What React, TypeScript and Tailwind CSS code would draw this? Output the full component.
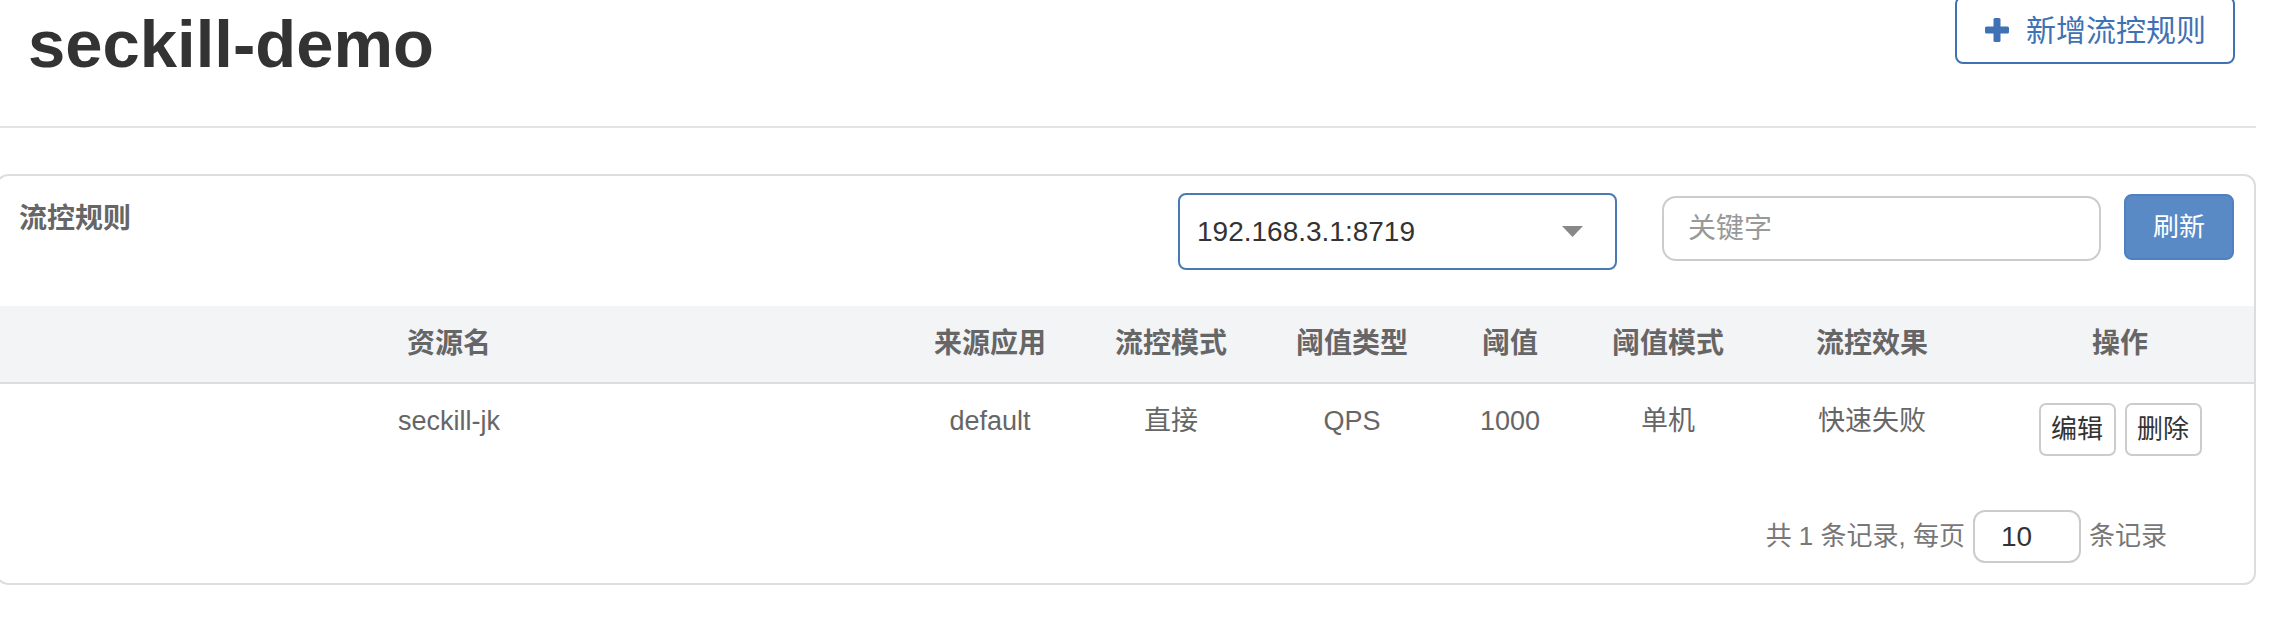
import React from "react";

const FONT = { fontFamily: '"Liberation Sans", "Noto Sans CJK SC", sans-serif' };

const columns = [
  { title: "资源名", width: "w-[902px]" },
  { title: "来源应用", width: "w-[180px]" },
  { title: "流控模式", width: "w-[182px]" },
  { title: "阈值类型", width: "w-[180px]" },
  { title: "阈值", width: "w-[136px]" },
  { title: "阈值模式", width: "w-[180px]" },
  { title: "流控效果", width: "w-[228px]" },
  { title: "操作", width: "" },
];

const rules = [
  {
    resource: "seckill-jk",
    limitApp: "default",
    strategy: "直接",
    grade: "QPS",
    count: "1000",
    clusterMode: "单机",
    behavior: "快速失败",
  },
];

function PlusIcon() {
  return (
    <svg width="24" height="24" viewBox="0 0 24 24" fill="#3f72b4">
      <rect x="8.5" y="0" width="7" height="24" rx="1.5" />
      <rect x="0" y="8.5" width="24" height="7" rx="1.5" />
    </svg>
  );
}

function RuleRow({ rule }: { rule: (typeof rules)[number] }) {
  const cells = [
    rule.resource,
    rule.limitApp,
    rule.strategy,
    rule.grade,
    rule.count,
    rule.clusterMode,
    rule.behavior,
  ];
  return (
    <tr>
      {cells.map((c, i) => (
        <td
          key={i}
          className="align-top pt-[17px] pb-[16px] text-center text-[27px] leading-[40px] text-[#666]"
        >
          {c}
        </td>
      ))}
      <td className="align-top pt-[19px] pb-[16px] text-center">
        <div className="flex justify-center gap-[9px]">
          <button className="h-[53px] w-[77px] rounded-[7px] border-2 border-[#ccc] bg-white text-[26px] text-[#333]">
            编辑
          </button>
          <button className="h-[53px] w-[77px] rounded-[7px] border-2 border-[#ccc] bg-white text-[26px] text-[#333]">
            删除
          </button>
        </div>
      </td>
    </tr>
  );
}

export default function App() {
  return (
    <div className="w-[2270px] h-[634px] overflow-hidden bg-white pr-[14px]" style={FONT}>
      {/* page header */}
      <div className="flex h-[128px] items-start justify-between border-b-2 border-[#e3e3e3] pl-[28px] pr-[21px]">
        <h1 className="mt-[8px] text-[67px] font-bold leading-[72px] text-[#333]">
          seckill-demo
        </h1>
        <button className="-mt-[4px] flex h-[68px] items-center gap-[17px] rounded-[8px] border-2 border-[#3f72b4] bg-white pl-[28px] pr-[27px] text-[30px] text-[#3f72b4]">
          <PlusIcon />
          <span>新增流控规则</span>
        </button>
      </div>

      {/* rules panel */}
      <div className="-ml-[4px] mt-[46px] rounded-[12px] border-2 border-[#ddd] pb-[20px]">
        <div className="flex items-start pt-[17px] pl-[21px] pr-[20px]">
          <div className="mt-[6px] text-[28px] font-bold leading-[40px] text-[#666]">流控规则</div>
          <div className="ml-auto flex items-start">
            <div className="flex h-[77px] w-[439px] items-center justify-between rounded-[8px] border-2 border-[#4a7ab5] pl-[17px] pr-[32px] text-[28px] text-[#333]">
              <span>192.168.3.1:8719</span>
              <svg width="21" height="11" viewBox="0 0 21 11">
                <path d="M0 0 L21 0 L10.5 11 Z" fill="#888" />
              </svg>
            </div>
            <div className="ml-[45px] mt-[3px] flex h-[65px] w-[439px] items-center rounded-[14px] border-2 border-[#ccc] pl-[24px] text-[28px] text-[#999]">
              关键字
            </div>
            <button className="ml-[23px] mt-[1px] h-[66px] w-[110px] rounded-[8px] border-2 border-[#4f80bf] bg-[#5a8ac6] text-[26px] text-white">
              刷新
            </button>
          </div>
        </div>

        <table className="mt-[36px] w-full table-fixed border-collapse">
          <thead>
            <tr className="h-[77px] border-b-2 border-[#ddd] bg-[#f3f4f6]">
              {columns.map((col) => (
                <th
                  key={col.title}
                  className={`${col.width} text-center text-[28px] font-bold text-[#666]`}
                >
                  {col.title}
                </th>
              ))}
            </tr>
          </thead>
          <tbody>
            {rules.map((r) => (
              <RuleRow key={r.resource} rule={r} />
            ))}
          </tbody>
        </table>

        <div className="mt-[38px] flex items-center justify-end pr-[87px] text-[26px] text-[#777]">
          <span>共 1 条记录, 每页</span>
          <div className="mx-[8px] flex h-[53px] w-[108px] items-center rounded-[12px] border-2 border-[#ccc] pl-[26px] text-[28px] text-[#333]">
            10
          </div>
          <span>条记录</span>
        </div>
      </div>
    </div>
  );
}
